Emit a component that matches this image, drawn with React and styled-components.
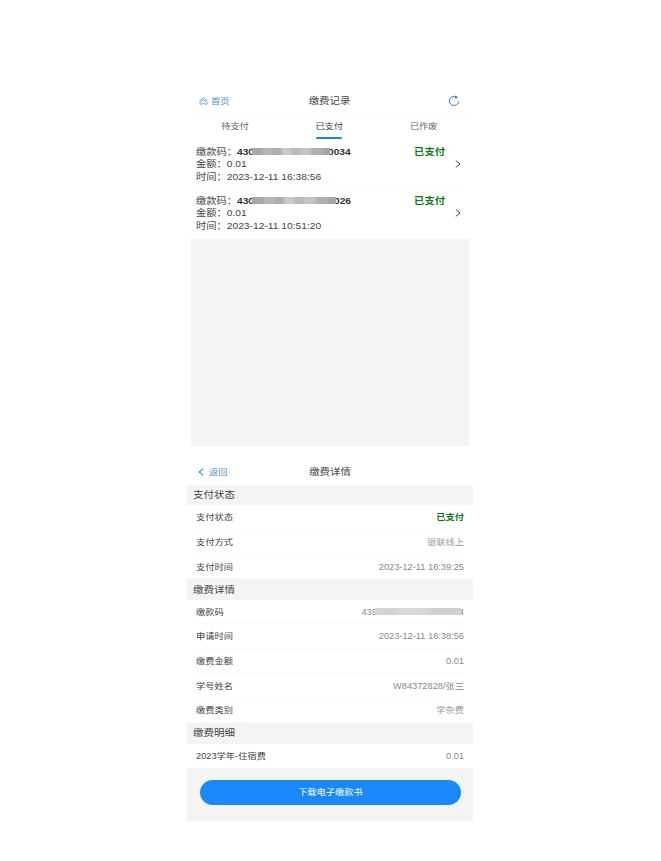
import React from "react";
import styled, { createGlobalStyle } from "styled-components";

const GlobalStyle = createGlobalStyle`
  * { box-sizing: border-box; }
  body {
    margin: 0;
    background: #fff;
    color: #444;
    font-family: "Liberation Sans", "Noto Sans CJK SC", sans-serif;
  }
`;

const Page = styled.main`
  width: 661px;
  height: 861px;
  padding-top: 88px;
  overflow: hidden;
  background: #fff;
`;

const Text = styled.span`
  display: inline-block;
  white-space: nowrap;
  font-size: ${(p) => p.$size || 9.25}px;
  font-weight: ${(p) => (p.$bold ? 700 : 400)};
  color: ${(p) => p.$color || "#444"};
  line-height: 12px;
  transform: scaleY(0.92);
`;

const RecordsPanel = styled.section`
  width: 278px;
  height: 358px;
  margin-left: 191px;
  background: #f4f4f4;
`;

const DetailPanel = styled.section`
  width: 286px;
  height: 363px;
  margin: 12px 0 0 187px;
  background: #f4f4f4;
`;

const Header = styled.header`
  display: grid;
  grid-template-columns: 1fr auto 1fr;
  align-items: center;
  height: ${(p) => p.$height}px;
  padding: 0 ${(p) => p.$right}px 0 ${(p) => p.$left}px;
  background: #fff;
`;

const NavLink = styled.a`
  display: flex;
  align-items: center;
  gap: ${(p) => p.$gap}px;
  color: #4a91d0;
`;

const Refresh = styled.button`
  display: flex;
  justify-self: end;
  padding: 0;
  border: 0;
  background: none;
`;

const Tabs = styled.nav`
  display: grid;
  grid-template-columns: 88px 100.5px 88.5px;
  height: 26px;
  border-top: 1px solid #fafafa;
  background: #fff;
`;

const Tab = styled.div`
  display: flex;
  flex-direction: column;
  align-items: center;
  justify-content: space-between;
  padding: 5px 0 1px;
  height: 25px;
`;

const TabLine = styled.i`
  width: 26px;
  height: 2px;
  border-radius: 1px;
  background: #1c83ec;
`;

const Record = styled.article`
  display: flex;
  justify-content: space-between;
  height: ${(p) => p.$height}px;
  padding: 5.5px 8px 0 5px;
  background: linear-gradient(#f9f9f9, #f9f9f9) 5px 100% / 268px ${(p) => (p.$line ? 1 : 0)}px no-repeat #fff;
`;

const RecordInfo = styled.div`
  display: flex;
  flex-direction: column;
`;

const Line = styled.div`
  display: flex;
  align-items: center;
  height: 12.5px;
`;

const RecordSide = styled.div`
  display: flex;
  gap: 10px;
  height: 37px;
  margin-top: -0.5px;
`;

const ArrowSlot = styled.div`
  display: flex;
  align-items: center;
`;

const Mask = styled.span`
  width: ${(p) => p.$width}px;
  height: 7px;
  margin: 0 -2px;
  z-index: 1;
  background: ${(p) =>
    p.$light
      ? "linear-gradient(90deg, #d6d6d6 0, #d2d2d2 22%, #dadada 30%, #d7d7d7 60%, #cfcfcf 70%, #d1d1d1 100%)"
      : "linear-gradient(90deg, #a8a8a8 0 12%, #b6b6b6 16% 25%, #adadad 28% 36%, #c9c9c9 40% 48%, #bababa 52% 60%, #c3c3c3 63% 74%, #b0b0b0 78% 90%, #a4a4a4 93%)"};
`;

const SectionTitle = styled.h2`
  display: flex;
  align-items: center;
  height: ${(p) => p.$height}px;
  margin: 0;
  padding: 0 0 2px 6px;
  background: #f4f4f4;
`;

const Row = styled.div`
  display: flex;
  align-items: center;
  justify-content: space-between;
  height: ${(p) => p.$height || 24.7}px;
  padding: 0 9px;
  background: linear-gradient(#f9f9f9, #f9f9f9) 9px 100% / 268px ${(p) => (p.$last ? 0 : 1)}px no-repeat #fff;
`;

const Value = styled.div`
  display: flex;
  align-items: center;
`;

const DownloadButton = styled.button`
  display: flex;
  align-items: center;
  justify-content: center;
  width: 261px;
  height: 25px;
  margin: 12px 0 0 13px;
  padding: 0 0 1px;
  border: 0;
  border-radius: 13px;
  background: #1989fa;
  font-family: inherit;
`;

const HomeIcon = () => (
  <svg width="9" height="8" viewBox="0 0 9 8" fill="none" stroke="#4a91d0" strokeWidth=".8" strokeLinejoin="round">
    <path d="M.5 3.8 4.5.8l4 3M1.5 4.8 4.5 2.8l3 2M1 4.8v2.3h2.4L4.5 5.9l1.1 1.2H8V4.8" />
  </svg>
);

const RefreshIcon = () => (
  <svg width="12" height="12" viewBox="0 0 12 12" fill="none" stroke="#3478ca" strokeWidth="1">
    <path d="M8.6 2.2A4.7 4.5 0 1 0 10.7 6.4" />
    <path d="M7.6.7 9.6 2.6 7.4 3.4Z" fill="#3478ca" strokeWidth=".5" />
  </svg>
);

const Chevron = () => (
  <svg width="6" height="8" viewBox="0 0 6 8" fill="none" stroke="#444" strokeWidth="1">
    <path d="m.8.6 4.2 3.4L.8 7.4" />
  </svg>
);

const BackIcon = () => (
  <svg width="6" height="8" viewBox="0 0 6 8" fill="none" stroke="#3f8bd9" strokeWidth="1.1">
    <path d="M5.3.6 1 4l4.3 3.4" />
  </svg>
);

const records = [
  { tail: "0034", mask: 78, time: "2023-12-11 16:38:56", height: 49 },
  { tail: "026", mask: 84, time: "2023-12-11 10:51:20", height: 49.5 },
];

const GREEN = "#087d13";
const GRAY = "#999";

function PaymentRecord({ record, line }) {
  return (
    <Record $height={record.height} $line={line}>
      <RecordInfo>
        <Line>
          <Text $size={10.25}>缴款码：</Text>
          <Text $size={10.2} $bold $color="#333">430</Text>
          <Mask $width={record.mask} />
          <Text $size={10.2} $bold $color="#333">{record.tail}</Text>
        </Line>
        <Line><Text $size={10.25}>金额：0.01</Text></Line>
        <Line><Text $size={10.25}>时间：{record.time}</Text></Line>
      </RecordInfo>
      <RecordSide>
        <Text $size={10.3} $bold $color={GREEN}>已支付</Text>
        <ArrowSlot><Chevron /></ArrowSlot>
      </RecordSide>
    </Record>
  );
}

function DetailRow({ label, children, height, last }) {
  return (
    <Row $height={height} $last={last}>
      <Text>{label}</Text>
      <Value>{children}</Value>
    </Row>
  );
}

export default function App() {
  return (
    <>
      <GlobalStyle />
      <Page>
        <RecordsPanel>
          <Header $height={26} $left={8} $right={9}>
            <NavLink $gap={3}><HomeIcon /><Text $color="#4a91d0">首页</Text></NavLink>
            <Text $size={10.4}>缴费记录</Text>
            <Refresh aria-label="刷新"><RefreshIcon /></Refresh>
          </Header>
          <Tabs>
            <Tab><Text $color="#666">待支付</Text></Tab>
            <Tab><Text>已支付</Text><TabLine /></Tab>
            <Tab><Text $color="#666">已作废</Text></Tab>
          </Tabs>
          {records.map((record, i) => (
            <PaymentRecord key={record.time} record={record} line={i === 0} />
          ))}
        </RecordsPanel>
        <DetailPanel>
          <Header $height={27} $left={11} $right={11}>
            <NavLink $gap={5}><BackIcon /><Text $color="#4a91d0">返回</Text></NavLink>
            <Text $size={10.4}>缴费详情</Text>
          </Header>
          <SectionTitle $height={20}><Text $size={10.5}>支付状态</Text></SectionTitle>
          <DetailRow label="支付状态"><Text $bold $color={GREEN}>已支付</Text></DetailRow>
          <DetailRow label="支付方式"><Text $color={GRAY}>银联线上</Text></DetailRow>
          <DetailRow label="支付时间" last><Text $color="#888">2023-12-11 16:39:25</Text></DetailRow>
          <SectionTitle $height={20.9}><Text $size={10.5}>缴费详情</Text></SectionTitle>
          <DetailRow label="缴款码" height={24}>
            <Text $color="#888">439</Text><Mask $width={86} $light /><Text $color="#888">4</Text>
          </DetailRow>
          <DetailRow label="申请时间"><Text $color="#888">2023-12-11 16:38:56</Text></DetailRow>
          <DetailRow label="缴费金额"><Text $color="#888">0.01</Text></DetailRow>
          <DetailRow label="学号姓名"><Text $color="#888">W84372828/张三</Text></DetailRow>
          <DetailRow label="缴费类别" last><Text $color={GRAY}>学杂费</Text></DetailRow>
          <SectionTitle $height={21}><Text $size={10.5}>缴费明细</Text></SectionTitle>
          <DetailRow label="2023学年-住宿费" height={24} last><Text $color="#888">0.01</Text></DetailRow>
          <DownloadButton><Text $color="#fff">下载电子缴款书</Text></DownloadButton>
        </DetailPanel>
      </Page>
    </>
  );
}
